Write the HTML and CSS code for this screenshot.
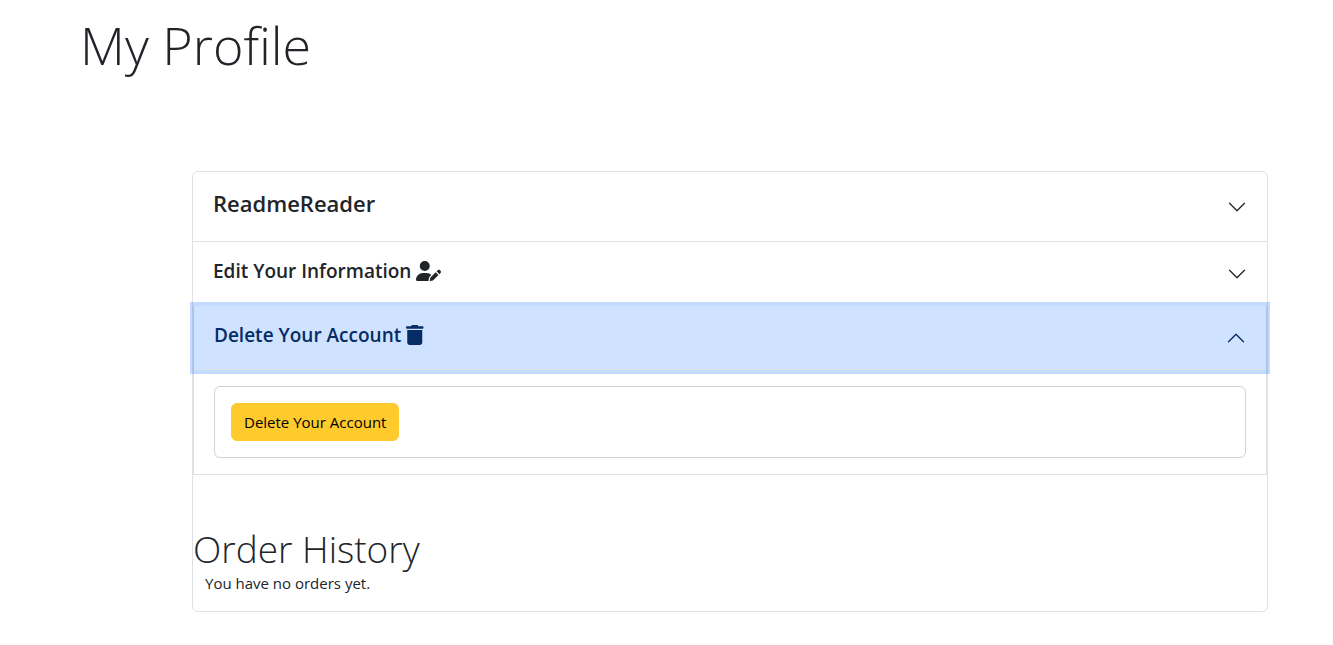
FILE: index.html
```html
<!DOCTYPE html>
<html lang="en">
<head>
<meta charset="utf-8">
<meta name="viewport" content="width=device-width, initial-scale=1">
<title>My Profile</title>
<link rel="stylesheet" href="styles.css">
</head>
<body>
<main class="page">
  <h1 class="page-title">My Profile</h1>

  <div class="profile">
    <section class="item">
      <h2 class="item-header">
        <button class="toggle toggle-name" type="button" aria-expanded="false">
          <span class="label">ReadmeReader</span>
          <svg class="chevron" viewBox="0 0 16 16" fill="currentColor" aria-hidden="true"><path d="M1.646 4.646a.5.5 0 0 1 .708 0L8 10.293l5.646-5.647a.5.5 0 0 1 .708.708l-6 6a.5.5 0 0 1-.708 0l-6-6a.5.5 0 0 1 0-.708z"/></svg>
        </button>
      </h2>
    </section>

    <section class="item">
      <h2 class="item-header">
        <button class="toggle" type="button" aria-expanded="false">
          <span class="label">Edit Your Information
            <svg class="icon icon-user" viewBox="0 0 640 512" fill="currentColor" aria-hidden="true"><path d="M224 256A128 128 0 1 0 224 0a128 128 0 1 0 0 256zm-45.700 48C79.800 304 0 383.800 0 482.300C0 498.700 13.300 512 29.700 512H322.800c-3.100-8.800-3.700-18.400-1.400-27.800l15-60.100c2.800-11.300 8.600-21.500 16.800-29.700l40.300-40.300c-32.100-31-75.700-50.100-123.900-50.100H178.300zm435.500-68.300c-15.600-15.600-40.900-15.600-56.600 0l-29.400 29.400 71 71 29.400-29.400c15.600-15.600 15.600-40.900 0-56.600l-14.400-14.400zM375.900 417c-4.100 4.100-7 9.200-8.400 14.900l-15 60.100c-1.400 5.500 .2 11.200 4.200 15.200s9.700 5.600 15.200 4.200l60.100-15c5.600-1.400 10.800-4.300 14.900-8.400L576.100 358.700l-71-71L375.900 417z"/></svg></span>
          <svg class="chevron" viewBox="0 0 16 16" fill="currentColor" aria-hidden="true"><path d="M1.646 4.646a.5.5 0 0 1 .708 0L8 10.293l5.646-5.647a.5.5 0 0 1 .708.708l-6 6a.5.5 0 0 1-.708 0l-6-6a.5.5 0 0 1 0-.708z"/></svg>
        </button>
      </h2>
    </section>

    <section class="item item-open">
      <h2 class="item-header">
        <button class="toggle toggle-active" type="button" aria-expanded="true" aria-controls="delete-panel">
          <span class="label">Delete Your Account
            <svg class="icon icon-trash" viewBox="0 0 448 512" fill="currentColor" aria-hidden="true"><path d="M135.200 17.700C140.600 6.800 151.700 0 163.800 0H284.200c12.100 0 23.200 6.800 28.600 17.700L320 32h96c17.700 0 32 14.300 32 32s-14.300 32-32 32H32C14.300 96 0 81.700 0 64S14.300 32 32 32h96l7.200-14.300zM32 128H416V448c0 35.300-28.700 64-64 64H96c-35.300 0-64-28.700-64-64V128z"/></svg></span>
          <svg class="chevron" viewBox="0 0 16 16" fill="currentColor" aria-hidden="true"><path d="M1.646 4.646a.5.5 0 0 1 .708 0L8 10.293l5.646-5.647a.5.5 0 0 1 .708.708l-6 6a.5.5 0 0 1-.708 0l-6-6a.5.5 0 0 1 0-.708z"/></svg>
        </button>
      </h2>
      <div class="panel" id="delete-panel">
        <div class="card">
          <button class="delete-button" type="button">Delete Your Account</button>
        </div>
      </div>
    </section>

    <section class="orders">
      <h2 class="orders-title">Order History</h2>
      <p class="orders-text">You have no orders yet.</p>
    </section>
  </div>
</main>
</body>
</html>
```
FILE: styles.css
```css
*, *::before, *::after {
  box-sizing: border-box;
}

body {
  margin: 0;
  background: #fff;
  color: #212529;
  font-family: "Segoe UI", "Open Sans", "Noto Sans", sans-serif;
  font-size: 15px;
  line-height: 24px;
}

h1, h2, p {
  margin: 0;
}

button {
  font: inherit;
  color: inherit;
  cursor: pointer;
}

.page {
  padding: 11px 65px 33px 80px;
}

.page-title {
  font-size: 52px;
  font-weight: 300;
  line-height: 68px;
}

.profile {
  margin: 92px 0 0 112px;
  border: 1px solid #dee2e6;
  border-radius: 6px;
}

.item + .item {
  border-top: 1px solid #dee2e6;
}

.item + .item-open {
  border: 1px solid #dee2e6;
  border-top: 0;
}

.item-header {
  font-size: 19px;
  font-weight: 600;
  line-height: 24px;
}

.toggle {
  display: flex;
  align-items: center;
  justify-content: space-between;
  width: 100%;
  padding: 16px 20px;
  border: 0;
  border-radius: 6px;
  background: #fff;
  text-align: left;
}

.toggle-name {
  font-size: 22px;
  line-height: 29px;
}

.toggle-active {
  border-radius: 0;
  background: #cfe2ff;
  color: #052c65;
  box-shadow: 0 0 0 4px rgba(13, 110, 253, 0.25), inset 0 -1px 0 #dee2e6;
}

.label {
  padding: 1px 0 7px;
}

.icon {
  height: 20px;
  vertical-align: -3px;
}

.chevron {
  flex: none;
  width: 20px;
  height: 20px;
}

.toggle-active .chevron {
  transform: rotate(180deg);
}

.panel {
  padding: 16px 20px;
}

.card {
  padding: 16px;
  border: 1px solid #d0d2d4;
  border-radius: 6px;
}

.delete-button {
  display: block;
  padding: 6px 12px;
  border: 1px solid #ffca2c;
  border-radius: 6px;
  background: #ffca2c;
  color: #000;
}

.orders {
  padding: 52px 0 16px;
}

.orders-title {
  font-size: 37px;
  font-weight: 300;
  line-height: 44px;
}

.orders-text {
  padding: 0 12px;
}
```
